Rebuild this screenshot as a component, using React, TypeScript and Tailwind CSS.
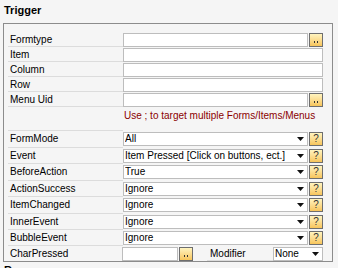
import type { ReactNode } from "react";

// ── small controls ───────────────────────────────────────────────────────────

function YellowBtn({ children }: { children: ReactNode }) {
  return (
    <div className="ml-[1px] w-[14px] h-[14px] shrink-0 border border-[#6e6e6e] bg-linear-to-b from-[#fff4bf] to-[#f7c55a] flex items-center justify-center text-[10px] leading-none text-[#333]">
      {children}
    </div>
  );
}

function Dots() {
  return (
    <YellowBtn>
      <span className="flex gap-[2px] mt-[4px]">
        <span className="w-[1px] h-[2px] bg-[#333]" />
        <span className="w-[1px] h-[2px] bg-[#333]" />
      </span>
    </YellowBtn>
  );
}

function TextBox({ className }: { className: string }) {
  return <div className={`h-[14px] bg-white border border-[#bdbdbd] ${className}`} />;
}

function Select({ value, className }: { value: string; className: string }) {
  return (
    <div className={`h-[14px] bg-white border border-[#bdbdbd] flex items-center pl-[1px] pr-[3px] ${className}`}>
      <span className="flex-1 truncate leading-[12px]">{value}</span>
      <svg width="7" height="4" viewBox="0 0 7 4" className="shrink-0">
        <polygon points="0,0 7,0 3.5,4" fill="#111" />
      </svg>
    </div>
  );
}

// ── rows ──────────────────────────────────────────────────────────────────────

function Row({ label, tall, children }: { label: string; tall?: boolean; children: ReactNode }) {
  return (
    <div className={tall ? "flex h-[17px]" : "flex h-[16px]"}>
      <div className="w-[115px] border-b border-[#dcdcdc] pl-[2px] pt-[2px] leading-[12px]">{label}</div>
      <div className="flex-1 flex items-start pt-[1px]">{children}</div>
    </div>
  );
}

function TopRow({ label, children }: { label: string; children: ReactNode }) {
  return (
    <div className="flex h-[15px]">
      <div className="w-[115px] border-b border-[#dcdcdc] pl-[2px] pt-[2px] leading-[12px]">{label}</div>
      <div className="flex-1 flex items-start pt-[1px]">{children}</div>
    </div>
  );
}

export default function App() {
  return (
    <div className="w-[338px] h-[268px] overflow-hidden bg-[#f5f5f5] text-[10px] text-black font-['Liberation_Sans','DejaVu_Sans',sans-serif]">
      <div className="pl-[4px] pt-[4px] h-[23px] font-bold text-[11px] leading-[12px]">Trigger</div>

      <div className="ml-[3px] w-[330px] border border-[#8c8c8c] pl-[4px] pr-[9px] pt-[8px]">
        <TopRow label="Formtype">
          <TextBox className="w-[185px]" />
          <Dots />
        </TopRow>
        <TopRow label="Item">
          <TextBox className="w-[200px]" />
        </TopRow>
        <TopRow label="Column">
          <TextBox className="w-[200px]" />
        </TopRow>
        <TopRow label="Row">
          <TextBox className="w-[200px]" />
        </TopRow>
        <TopRow label="Menu Uid">
          <TextBox className="w-[185px]" />
          <Dots />
        </TopRow>

        <div className="flex h-[24px]">
          <div className="w-[115px] border-b border-[#dcdcdc]" />
          <div className="flex-1 pt-[3px] pl-[1px] leading-[12px] text-[#8b0000] whitespace-nowrap">
            Use ; to target multiple Forms/Items/Menus
          </div>
        </div>

        <Row label="FormMode" tall>
          <Select value="All" className="w-[185px]" />
          <YellowBtn>?</YellowBtn>
        </Row>
        <Row label="Event">
          <Select value="Item Pressed [Click on buttons, ect.]" className="w-[185px]" />
          <YellowBtn>?</YellowBtn>
        </Row>
        <Row label="BeforeAction" tall>
          <Select value="True" className="w-[185px]" />
          <YellowBtn>?</YellowBtn>
        </Row>
        <Row label="ActionSuccess">
          <Select value="Ignore" className="w-[185px]" />
          <YellowBtn>?</YellowBtn>
        </Row>
        <Row label="ItemChanged" tall>
          <Select value="Ignore" className="w-[185px]" />
          <YellowBtn>?</YellowBtn>
        </Row>
        <Row label="InnerEvent">
          <Select value="Ignore" className="w-[185px]" />
          <YellowBtn>?</YellowBtn>
        </Row>
        <Row label="BubbleEvent">
          <Select value="Ignore" className="w-[185px]" />
          <YellowBtn>?</YellowBtn>
        </Row>
        <div className="flex h-[15px]">
          <div className="w-[115px] pl-[2px] pt-[2px] leading-[12px]">CharPressed</div>
          <div className="flex-1 flex items-start pt-[1px]">
            <TextBox className="w-[56px]" />
            <Dots />
            <div className="ml-[14px] w-[66px] h-[14px] border-b border-[#dcdcdc] pl-[3px] pt-[1px] leading-[12px]">Modifier</div>
            <Select value="None" className="w-[50px]" />
          </div>
        </div>
      </div>

      <div className="pl-[4px] pt-[2px] font-bold text-[11px] leading-[12px]">Response</div>
    </div>
  );
}
